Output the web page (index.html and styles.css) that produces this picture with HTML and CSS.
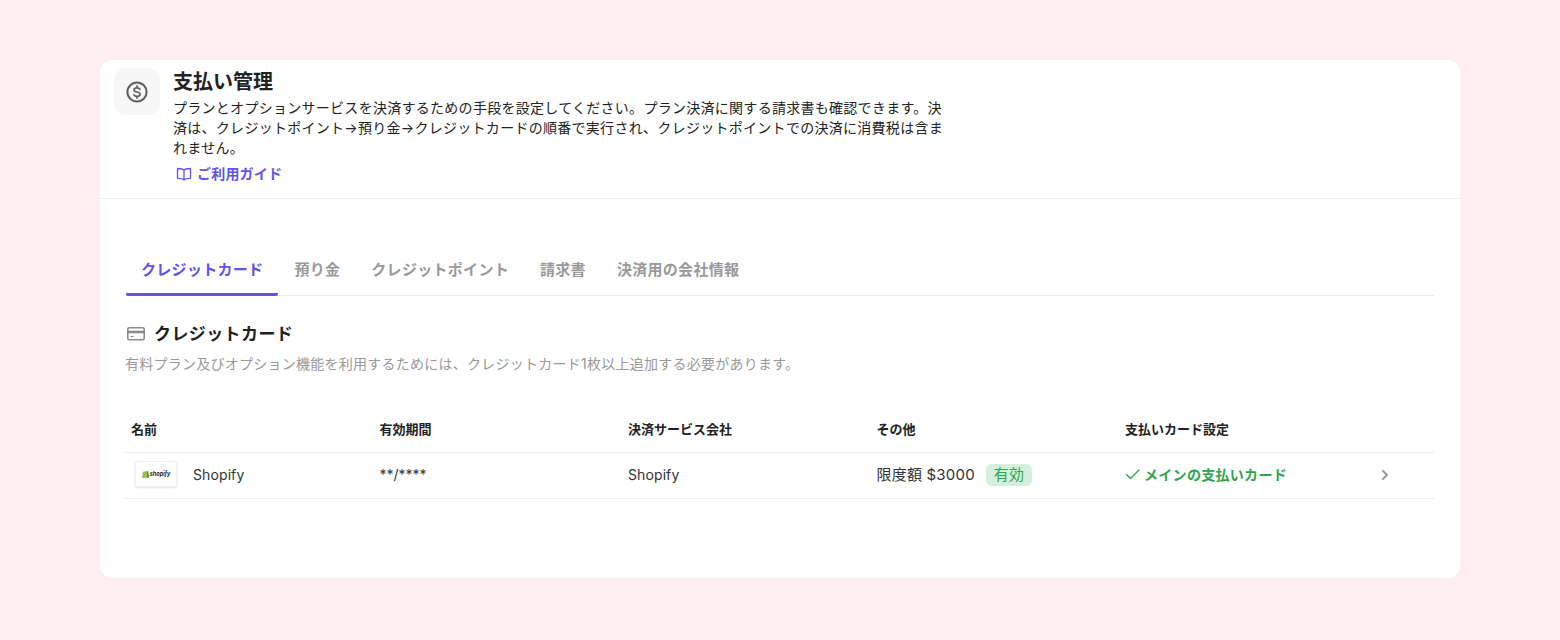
FILE: index.html
```html
<!DOCTYPE html>
<html lang="ja">
<head>
<meta charset="utf-8">
<title>支払い管理</title>
<link rel="stylesheet" href="styles.css">
</head>
<body>
<main class="card">
  <header class="head">
    <div class="head-icon">
      <svg width="24" height="24" viewBox="0 0 24 24" fill="none" stroke="#5f5f5f" stroke-width="2" stroke-linecap="round" stroke-linejoin="round"><circle cx="12" cy="12" r="9.6"/><path d="M15 9.300c-.5-.9-1.500-1.500-3-1.500-1.800 0-3 .9-3 2.100 0 2.900 6.100 1.300 6.100 4.300 0 1.300-1.300 2.100-3.100 2.100-1.500 0-2.600-.6-3.100-1.500M12 5.900v1.900M12 16.300v1.800" stroke-width="1.700"/></svg>
    </div>
    <div class="head-text">
      <h1 class="title">支払い管理</h1>
      <p class="desc">プランとオプションサービスを決済するための手段を設定してください。プラン決済に関する請求書も確認できます。決済は、クレジットポイント→預り金→クレジットカードの順番で実行され、クレジットポイントでの決済に消費税は含まれません。</p>
      <a class="guide" href="#">
        <svg width="16" height="16" viewBox="0 0 16 16" fill="none" stroke="#6052ee" stroke-width="1.300" stroke-linejoin="round" stroke-linecap="round"><path d="M8 4v10M8 4C7 2.800 5.500 2.500 1.500 2.500v9.800c4 0 5.500.3 6.500 1.700 1-1.400 2.500-1.700 6.500-1.700V2.500C10.500 2.500 9 2.800 8 4z"/></svg>
        ご利用ガイド
      </a>
    </div>
  </header>
  <section class="body">
    <nav class="tabs">
      <a class="tab tab-active" href="#">クレジットカード</a>
      <a class="tab" href="#">預り金</a>
      <a class="tab" href="#">クレジットポイント</a>
      <a class="tab" href="#">請求書</a>
      <a class="tab" href="#">決済用の会社情報</a>
    </nav>
    <div class="sec-head">
      <svg width="20" height="20" viewBox="0 0 20 20" fill="none" stroke="#8c8c8c" stroke-width="1.600"><rect x="1.800" y="3.800" width="16.400" height="12" rx="1.500"/><path d="M1.800 8h16.400" stroke-width="2.600"/><path d="M4.500 12.500h3" stroke-width="1.200"/></svg>
      <h2 class="sec-title">クレジットカード</h2>
    </div>
    <p class="sec-desc">有料プラン及びオプション機能を利用するためには、クレジットカード1枚以上追加する必要があります。</p>
    <table class="tbl">
      <colgroup><col class="col"><col class="col"><col class="col"><col class="col"><col></colgroup>
      <thead>
        <tr><th>名前</th><th>有効期間</th><th>決済サービス会社</th><th>その他</th><th>支払いカード設定</th></tr>
      </thead>
      <tbody>
        <tr>
          <td>
            <div class="name-cell">
              <span class="logo">
                <svg width="7" height="8" viewBox="0 0 7 8"><path d="M1 1.800 6 1l1 6.500L0 8z" fill="#95bf47"/><path d="M5 1.200 6 1l1 6.500L5 8z" fill="#5e8e3e"/></svg>
                <span class="logo-text">shopify</span>
              </span>
              <span class="name">Shopify</span>
            </div>
          </td>
          <td>**/****</td>
          <td><span class="name">Shopify</span></td>
          <td><span class="limit">限度額 $3000</span><span class="badge">有効</span></td>
          <td>
            <div class="main-cell">
              <span class="main-label">
                <svg width="16" height="16" viewBox="0 0 16 16" fill="none" stroke="#2ea44f" stroke-width="1.300" stroke-linecap="round" stroke-linejoin="round"><path d="M1.500 8.500 5.500 12.500 14 4"/></svg>
                メインの支払いカード
              </span>
              <svg class="chev" width="16" height="16" viewBox="0 0 16 16" fill="none" stroke="#9a9a9a" stroke-width="2" stroke-linecap="round" stroke-linejoin="round"><path d="M6 4l4 4-4 4"/></svg>
            </div>
          </td>
        </tr>
      </tbody>
    </table>
  </section>
</main>
</body>
</html>
```
FILE: styles.css
```css
* { box-sizing: border-box; }
html, body { margin: 0; padding: 0; }
body {
  background: #ffedf0;
  height: 640px;
  padding: 60px 100px 0;
  font-family: Inter, "Noto Sans CJK JP", sans-serif;
  color: #222;
}
.card {
  background: #fff;
  border-radius: 12px;
  height: 518px;
}
.head {
  display: flex;
  gap: 13px;
  padding: 8px 14px 0;
  height: 139px;
  border-bottom: 1px solid #f0f0f0;
}
.head-icon {
  width: 46px;
  height: 47px;
  flex: none;
  border-radius: 12px;
  background: #f7f7f7;
  display: flex;
  align-items: center;
  justify-content: center;
}
.head-text { width: 775px; }
.title {
  margin: 1px 0 0;
  font-size: 20px;
  line-height: 26px;
  font-weight: 700;
}
.desc {
  margin: 3px 0 0;
  font-size: 14px;
  line-height: 20px;
  letter-spacing: 0.28px;
  color: #222;
}
.guide {
  display: flex;
  align-items: center;
  gap: 5px;
  margin: 6px 0 0 3px;
  font-size: 14px;
  line-height: 20px;
  font-weight: 700;
  letter-spacing: 0.2px;
  color: #6052ee;
  text-decoration: none;
}
.body { padding: 50px 26px 0 25px; }
.tabs {
  display: flex;
  margin-left: 1px;
  border-bottom: 1px solid #ebebeb;
  height: 47px;
}
.tab {
  padding: 10px 15px 0;
  height: 47px;
  font-size: 15px;
  line-height: 22px;
  font-weight: 700;
  letter-spacing: 0.3px;
  color: #999;
  text-decoration: none;
  margin-right: 1px;
}
.tab-active {
  color: #6052ee;
  border-bottom: 3px solid #6052ee;
  border-radius: 0 0 2px 2px;
}
.sec-head {
  display: flex;
  align-items: center;
  gap: 8px;
  margin: 25px 0 0 1px;
  height: 26px;
}
.sec-title {
  margin: 0;
  font-size: 17px;
  line-height: 26px;
  font-weight: 700;
  letter-spacing: 0.4px;
}
.sec-desc {
  margin: 7px 0 0;
  font-size: 14px;
  line-height: 20px;
  letter-spacing: 0.25px;
  color: #999;
}
.tbl {
  width: 100%;
  table-layout: fixed;
  border-collapse: collapse;
  margin-top: 30px;
}
.col { width: 248.5px; }
.tbl th {
  height: 48px;
  padding: 2px 6px 0;
  text-align: left;
  font-size: 13px;
  font-weight: 700;
  color: #222;
  border-bottom: 1px solid #ececec;
}
.tbl td {
  height: 46px;
  padding: 0 3px 2px 6px;
  font-size: 14px;
  color: #333;
  border-bottom: 1px solid #ececec;
}
.name-cell { display: flex; align-items: center; gap: 16px; padding-left: 4px; }
.name { letter-spacing: 0.1px; }
.logo {
  width: 42px;
  height: 26px;
  border: 1px solid #efefef;
  border-radius: 3px;
  box-shadow: 0 1px 2px rgba(0,0,0,.12);
  display: flex;
  align-items: center;
  justify-content: center;
  gap: 1px;
}
.logo-text {
  font-size: 5.500px;
  font-weight: 700;
  font-style: italic;
  color: #222;
}
.limit { font-size: 15px; letter-spacing: 0.2px; }
.badge {
  display: inline-block;
  margin-left: 11px;
  padding: 0 8px;
  height: 22px;
  line-height: 22px;
  font-size: 15px;
  letter-spacing: 0.3px;
  border-radius: 6px;
  background: #d5eedd;
  color: #2ea44f;
}
.main-cell { display: flex; align-items: center; justify-content: space-between; padding-right: 38px; }
.chev { margin-top: 2px; }
.main-label {
  display: flex;
  align-items: center;
  gap: 3px;
  font-size: 14px;
  font-weight: 700;
  letter-spacing: 0.3px;
  color: #2ea44f;
}
```
